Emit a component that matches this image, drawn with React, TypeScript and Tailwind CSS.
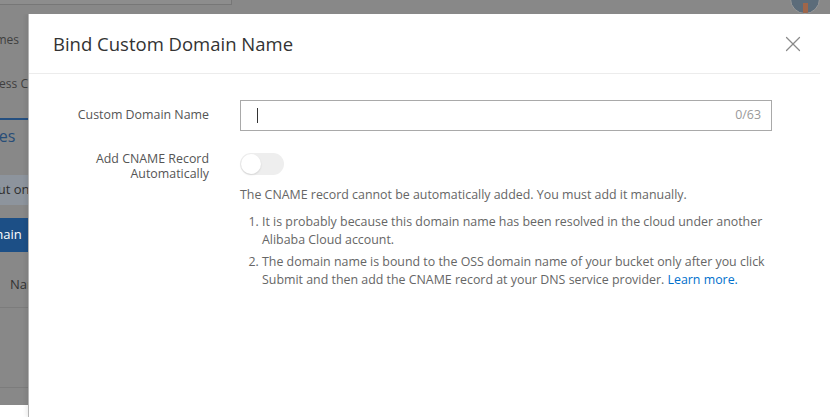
import { X } from "lucide-react";

const font = { fontFamily: '"Open Sans", "Noto Sans", Arial, sans-serif' };

function BackdropStrip() {
  // the piece of the page behind the drawer that peeks out on the left, already dimmed
  return (
    <div className="w-[28px] h-[391px] shrink-0 bg-[#888888] overflow-hidden text-[12px] whitespace-nowrap">
      <div className="h-[52px] flex items-center justify-end pr-[9px] text-[#3f3f3f]">
        <span>Domain Names</span>
      </div>
      <div className="h-[36px] flex items-center overflow-hidden text-[#3f3f3f]">
        <span className="ml-[-20px]">Access Control</span>
      </div>
      <div className="h-[18px] border-b-2 border-[#244f80]" />
      <div className="h-[32px] flex items-center overflow-hidden text-[16px] text-[#274d78]">
        <span className="ml-[-37px]">Names</span>
      </div>
      <div className="mt-[23px] h-[30px] bg-[#8d949d] flex items-center overflow-hidden text-[#2f2f2f] text-[13px]">
        <span className="ml-[-10px]">Put on</span>
      </div>
      <div className="mt-[13px] h-[34px] bg-[#1c4f86] flex items-center overflow-hidden text-white text-[13px]">
        <span className="ml-[-26px]">Domain</span>
      </div>
      <div className="h-[56px] pt-[10px] border-b border-[#7c7c7c] flex items-center overflow-hidden text-[#333] text-[13px]">
        <span className="ml-[10px]">Name</span>
      </div>
      <div className="h-[80px] border-b border-[#7c7c7c]" />
    </div>
  );
}

function Toggle() {
  return (
    <div className="mt-[2px] w-[44px] h-[22px] rounded-full bg-[#eeeeee] p-[1px] flex items-center">
      <span className="block w-[20px] h-[20px] rounded-full bg-white shadow-[0_1px_2px_rgba(0,0,0,0.12)]" />
    </div>
  );
}

export default function App() {
  return (
    <div className="w-[830px] h-[417px] bg-white overflow-hidden flex flex-col text-[#333]" style={font}>
      <div className="relative h-[14px] shrink-0 bg-[#888888]">
        <div className="w-[232px] h-[5px] bg-[#8d8d8d] border-b border-r border-[#777]" />
        <div className="absolute right-[10px] top-[-16px] w-[30px] h-[30px] rounded-full bg-[#5c6c7a] border border-[#9a9a9a] overflow-hidden">
          <div className="absolute left-[12px] top-[18px] w-[5px] h-[10px] bg-[#a0664a]" />
        </div>
      </div>

      <div className="flex flex-1 min-h-0 items-start">
        <BackdropStrip />

        <div className="flex-1 self-stretch bg-white border-l border-[#b4b4b4] shadow-[-2px_0_4px_rgba(0,0,0,0.08)]">
          <div className="h-[60px] mr-[10px] border-b border-[#ececec] flex items-center justify-between pl-[24px] pr-[14px]">
            <h2 className="text-[18.5px] text-[#333] mt-[1px]">Bind Custom Domain Name</h2>
            <X className="w-[26px] h-[26px] text-[#8a8a8a]" strokeWidth={1.1} />
          </div>

          <div className="pt-[26px] text-[12.4px]">
            <div className="flex items-center">
              <label className="w-[180px] text-right text-[#555]">Custom Domain Name</label>
              <div className="ml-[31px] w-[532px] h-[31px] border border-[#a9a9a9] flex items-center justify-between pl-[16px] pr-[10px]">
                <span className="w-[1px] h-[15px] bg-[#333]" />
                <span className="text-[#999]">0/63</span>
              </div>
            </div>

            <div className="flex mt-[20px]">
              <label className="w-[180px] text-right text-[#555] leading-[15px]">
                Add CNAME Record
                <br />
                Automatically
              </label>
              <div className="ml-[31px] w-[532px]">
                <Toggle />
                <p className="mt-[11px] text-[#666] leading-[18px]">
                  The CNAME record cannot be automatically added. You must add it manually.
                </p>
                <ol className="mt-[9px] list-decimal pl-[22px] text-[#666] leading-[18px] space-y-[4px]">
                  <li>
                    It is probably because this domain name has been resolved in the cloud under another Alibaba
                    Cloud account.
                  </li>
                  <li>
                    The domain name is bound to the OSS domain name of your bucket only after you click Submit and
                    then add the CNAME record at your DNS service provider.{" "}
                    <a className="text-[#0070cc]">Learn more.</a>
                  </li>
                </ol>
              </div>
            </div>
          </div>
        </div>
      </div>
    </div>
  );
}
